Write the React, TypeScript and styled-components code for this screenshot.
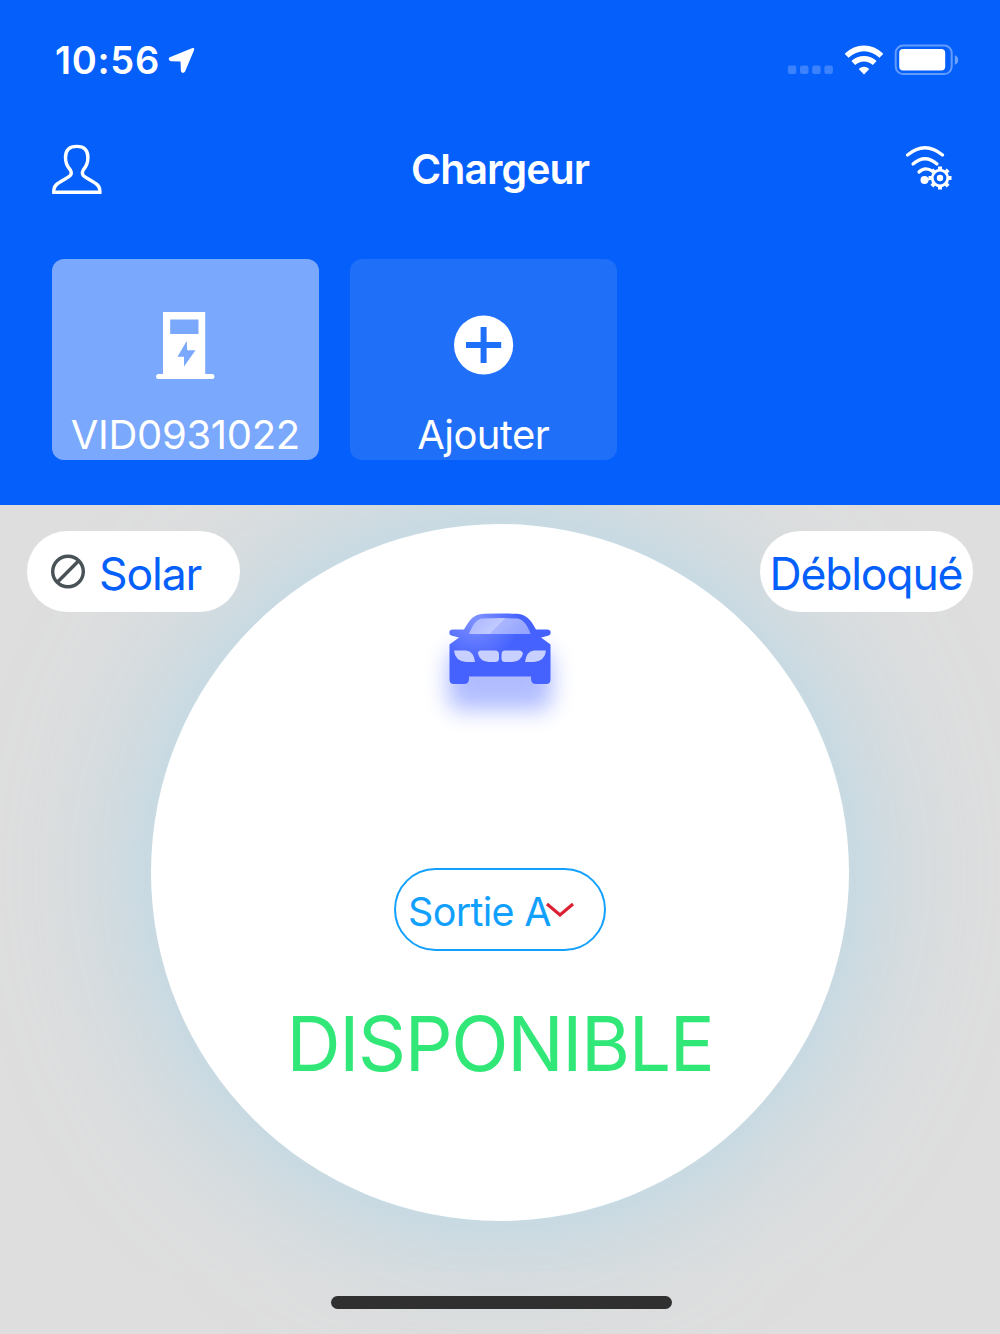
import React from "react";
import styled, { createGlobalStyle } from "styled-components";

const GlobalStyle = createGlobalStyle`
  * { box-sizing: border-box; }
  body { margin: 0; background: #dedede; font-family: Inter, "Liberation Sans", sans-serif; }
  button { font: inherit; border: 0; margin: 0; padding: 0; background: none; color: inherit; }
  svg { display: block; flex: none; }
`;

const Screen = styled.div`
  width: 1000px;
  height: 1334px;
  display: flex;
  flex-direction: column;
  overflow: hidden;
  background: #dedede;
`;

const Header = styled.header`
  height: 505px;
  flex: none;
  display: flex;
  flex-direction: column;
  background: #045ffb;
  color: #fff;
`;

const Label = styled.span<{ $size: number; $spacing?: number; $weight?: number; $color?: string }>`
  font-size: ${(p) => p.$size}px;
  line-height: 48px;
  letter-spacing: ${(p) => p.$spacing ?? 0}px;
  margin-right: ${(p) => -(p.$spacing ?? 0)}px;
  font-weight: ${(p) => p.$weight ?? 400};
  color: ${(p) => p.$color ?? "inherit"};
  white-space: nowrap;
`;

const StatusBar = styled.div`
  height: 120px;
  padding: 0 41px 0 55px;
  display: flex;
  align-items: center;
  justify-content: space-between;
`;

const StatusGroup = styled.div<{ $gap: number }>`
  display: flex;
  align-items: center;
  gap: ${(p) => p.$gap}px;
`;

const NavBar = styled.nav`
  height: 98px;
  padding: 0 48px 0 52px;
  display: grid;
  grid-template-columns: 50px 1fr 50px;
  align-items: center;
  justify-items: center;
`;

const Title = styled(Label)`
  padding-right: 3px;
`;

const ChargerList = styled.div`
  display: flex;
  gap: 31px;
  padding: 41px 52px 0;
`;

const ChargerCard = styled.button<{ $active?: boolean }>`
  width: 267px;
  height: 201px;
  padding-bottom: 1px;
  border-radius: 12px;
  display: flex;
  flex-direction: column;
  align-items: center;
  justify-content: flex-end;
  background: ${(p) => (p.$active ? "#79a8fc" : "#1f6ff9")};
`;

const CardIcon = styled.div`
  height: 99px;
  display: flex;
  align-items: center;
  margin-bottom: 16px;
`;

const Main = styled.main`
  flex: 1;
  overflow: hidden;
  display: grid;
  grid-template-columns: 1fr;
  grid-template-rows: 1fr 40px;
`;

const Dial = styled.section`
  grid-area: 1 / 1;
  justify-self: center;
  width: 698px;
  height: 697px;
  margin-top: 19px;
  border-radius: 50%;
  background: #fff;
  box-shadow: 0 0 150px rgba(135, 206, 240, 0.55);
  display: flex;
  flex-direction: column;
  align-items: center;
  padding-top: 70px;
`;

const Toolbar = styled.div`
  grid-area: 1 / 1;
  z-index: 1;
  height: 81px;
  margin: 26px 27px 0;
  display: flex;
  justify-content: space-between;
`;

const Pill = styled.button`
  width: 213px;
  height: 81px;
  border-radius: 41px;
  background: #fff;
  color: #045ffb;
  display: flex;
  align-items: center;
  justify-content: center;
  gap: 13px;

  ${Label} {
    padding-top: 4px;
  }
`;

const SolarPill = styled(Pill)`
  justify-content: flex-start;
  padding-left: 23px;
`;

const OutletSelect = styled.button`
  width: 212px;
  height: 83px;
  margin-top: 124px;
  padding: 4px 0 0 12px;
  border: 2px solid #12a0ff;
  border-radius: 42px;
  display: flex;
  align-items: center;
`;

const Chevron = styled.svg`
  margin: -3px 0 0 -6px;
`;

const Status = styled.strong`
  margin-top: 48px;
  font-size: 75px;
  line-height: 90px;
  font-weight: 400;
  letter-spacing: -1.4px;
  color: #30e777;
`;

const HomeIndicator = styled.div`
  grid-row: 2;
  justify-self: center;
  width: 341px;
  height: 13px;
  margin: 2px 0 0 2px;
  border-radius: 7px;
  background: #303030;
`;

const LocationArrow = () => (
  <svg width="28" height="28" viewBox="0 0 28 28">
    <path
      d="M25 3.200 2.300 12.400Q1.600 13.300 3 13.900L12.500 14.200Q13.700 14.300 13.800 15.500L14.200 25Q14.900 26.300 15.900 25Z"
      fill="#fff"
      stroke="#fff"
      strokeWidth="2.600"
      strokeLinejoin="round"
    />
  </svg>
);

const SignalDots = () => (
  <svg width="46" height="30" viewBox="0 0 46 30">
    {[0, 12.2, 24.4, 36.6].map((x) => (
      <rect key={x} x={x + 0.8} y="20.500" width="8.500" height="8.500" rx="2" fill="#fff" opacity="0.22" />
    ))}
  </svg>
);

const WifiIcon = () => (
  <svg width="40" height="30" viewBox="0 0 40 30">
    <g fill="none" stroke="#fff" strokeWidth="5.600">
      <path d="M2.600 10.800Q10.500 3.400 20 3.400T37.400 10.800" />
      <path d="M9.300 18Q14 13.700 20 13.700T30.700 18" />
    </g>
    <path d="M20 29.500 14.700 24Q20 19.600 25.300 24Z" fill="#fff" />
  </svg>
);

const BatteryIcon = () => (
  <svg width="65" height="32" viewBox="0 0 65 32">
    <rect x="1.700" y="1.600" width="56" height="28.500" rx="7.500" fill="none" stroke="#fff" strokeWidth="2" opacity="0.38" />
    <rect x="5.200" y="5" width="46" height="21.500" rx="4" fill="#fff" />
    <path d="M60.800 11.200q3.400 1.200 3.400 4.800t-3.400 4.800z" fill="#fff" opacity="0.42" />
  </svg>
);

const UserIcon = () => (
  <svg width="50" height="52" viewBox="0 0 50 52">
    <path
      d="M1.800 49.300H47.900Q48.300 43.500 43.700 40.500C39.700 37.300 34.700 35.500 31.500 32.800Q29.200 30.500 31.500 26.500C34.200 23.500 35.900 20 35.900 14.500C35.900 7 31.700 3.400 24.800 3.400S13.500 7 13.500 14.500C13.500 20 15.300 23.500 18 26.500Q20.500 30.500 18 32.800C14.800 35.500 9.800 37.300 5.800 40.500Q1.400 43.500 1.800 49.300Z"
      fill="none"
      stroke="#fff"
      strokeWidth="3.400"
    />
  </svg>
);

const WifiGearIcon = () => (
  <svg width="50" height="54" viewBox="0 0 50 54">
    <g fill="none" stroke="#fff" strokeWidth="3.200" strokeLinecap="round">
      <path d="M5.500 13Q23 -1.500 40.500 13" />
      <path d="M11 22Q23 11.500 35 22" />
      <path d="M17 30Q23 24 31 29.500" />
    </g>
    <circle cx="22.500" cy="38" r="4" fill="#fff" />
    <path d="M23 38 31 36.500" stroke="#fff" strokeWidth="2" />
    <g stroke="#fff" strokeWidth="4">
      {[0, 45, 90, 135].map((angle) => (
        <path key={angle} d="M38 24.500V29M38 43V47.500" transform={`rotate(${angle} 38 36)`} />
      ))}
    </g>
    <circle cx="38" cy="36" r="7.800" fill="#045ffb" stroke="#fff" strokeWidth="2.800" />
    <circle cx="38" cy="36" r="3.200" fill="#fff" />
  </svg>
);

const StationIcon = () => (
  <svg width="60" height="68" viewBox="0 0 60 68">
    <path
      fillRule="evenodd"
      fill="#fff"
      d="M7 0H49.200V62H56.200Q58.500 62 58.500 64.500T56.200 67H2.300Q0 67 0 64.500T2.300 62H7ZM14.200 7.500V22H42.500V7.500ZM30.700 29 21.500 44.700H28V54.500L39.500 38.300H31.200Z"
    />
  </svg>
);

const AddIcon = () => (
  <svg width="60" height="62" viewBox="0 0 60 62">
    <circle cx="29.600" cy="30" r="29.600" fill="#fff" />
    <path d="M29.600 12V48M12 30H47.200" stroke="#1f6ff9" strokeWidth="6" />
  </svg>
);

const BanIcon = () => (
  <svg width="36" height="36" viewBox="0 0 36 36" fill="none" stroke="#485257" strokeWidth="3.400">
    <circle cx="18" cy="17.500" r="15.300" />
    <path d="M7.300 28.300 28.700 6.700" />
  </svg>
);

const CarIcon = () => (
  <svg width="150" height="150" viewBox="0 0 150 150">
    <defs>
      <linearGradient id="glass" gradientUnits="userSpaceOnUse" x1="40" y1="29" x2="75.500" y2="64.500">
        <stop offset="0" stopColor="#aab6ff" />
        <stop offset="0.500" stopColor="#c1caff" />
        <stop offset="0.500" stopColor="#aab6fe" />
        <stop offset="1" stopColor="#94a3fd" />
      </linearGradient>
      <radialGradient id="paint" gradientUnits="userSpaceOnUse" cx="50" cy="24" r="45">
        <stop offset="0" stopColor="#7f91ff" />
        <stop offset="1" stopColor="#4562ff" />
      </radialGradient>
      <filter id="soft" filterUnits="userSpaceOnUse" x="-20" y="0" width="190" height="170">
        <feGaussianBlur stdDeviation="11" />
      </filter>
    </defs>
    <rect x="23" y="56" width="104" height="60" rx="12" fill="#4562ff" opacity="0.420" filter="url(#soft)" />
    <path
      transform="translate(0 .5)"
      fill="url(#paint)"
      d="M39 35C45 25 48 20 59 19.300Q75 18.500 92 19.300C102 20 106 26 111 35H122Q125.700 35 125.700 38T122 41.500L116 43 125.500 50V85Q125.500 89.500 121 89.500H111Q106 89.500 106 84V82H44V84Q44 89.500 39 89.500H29Q24.500 89.500 24.500 85V50L34 43 28 41.500Q24.300 41 24.300 38T28 35Z"
    />
    <path fill="url(#glass)" d="M44 40C47.300 32 50.300 25.500 57.300 24.600Q75 23.500 92.800 24.600C98.800 26 102.800 32 105.600 40Z" />
    <g fill="#c8d0ff" transform="translate(0 .5)">
      <path d="M29 56H41Q49 57 50 67.500H41Q30 66.500 29 56Z" />
      <path d="M121 56H109Q101 57 100 67.500H109Q120 66.500 121 56Z" />
      <path d="M56 56H70Q74 56 74 60V64Q74 67.500 70 67.500H64Q55 67 53 59Q53 56 56 56Z" />
      <path d="M94 56H80Q76.500 56 76.500 60V64Q76.500 67.500 80 67.500H87Q96 67 98 59Q97 56 94 56Z" />
    </g>
  </svg>
);

const App: React.FC = () => (
  <Screen>
    <GlobalStyle />
    <Header>
      <StatusBar>
        <StatusGroup $gap={8.5}>
          <Label $size={38} $weight={600} $spacing={0.7}>10:56</Label>
          <LocationArrow />
        </StatusGroup>
        <StatusGroup $gap={10.5}>
          <SignalDots />
          <WifiIcon />
          <BatteryIcon />
        </StatusGroup>
      </StatusBar>
      <NavBar>
        <UserIcon />
        <Title $size={41} $weight={600} $spacing={-0.9}>Chargeur</Title>
        <WifiGearIcon />
      </NavBar>
      <ChargerList>
        <ChargerCard $active>
          <CardIcon><StationIcon /></CardIcon>
          <Label $size={40} $spacing={-0.3}>VID0931022</Label>
        </ChargerCard>
        <ChargerCard>
          <CardIcon><AddIcon /></CardIcon>
          <Label $size={40} $spacing={-0.6}>Ajouter</Label>
        </ChargerCard>
      </ChargerList>
    </Header>
    <Main>
      <Dial>
        <CarIcon />
        <OutletSelect>
          <Label $size={39.5} $spacing={-0.7} $color="#12a0ff">Sortie A</Label>
          <Chevron width="30" height="18" viewBox="0 0 30 18">
            <path d="M2 3 15 14 28 3" fill="none" stroke="#dc1f32" strokeWidth="3.200" />
          </Chevron>
        </OutletSelect>
        <Status>DISPONIBLE</Status>
      </Dial>
      <Toolbar>
        <SolarPill>
          <BanIcon />
          <Label $size={44.5} $spacing={-1.1}>Solar</Label>
        </SolarPill>
        <Pill><Label $size={44.5} $spacing={-1.2}>Débloqué</Label></Pill>
      </Toolbar>
      <HomeIndicator />
    </Main>
  </Screen>
);

export default App;
